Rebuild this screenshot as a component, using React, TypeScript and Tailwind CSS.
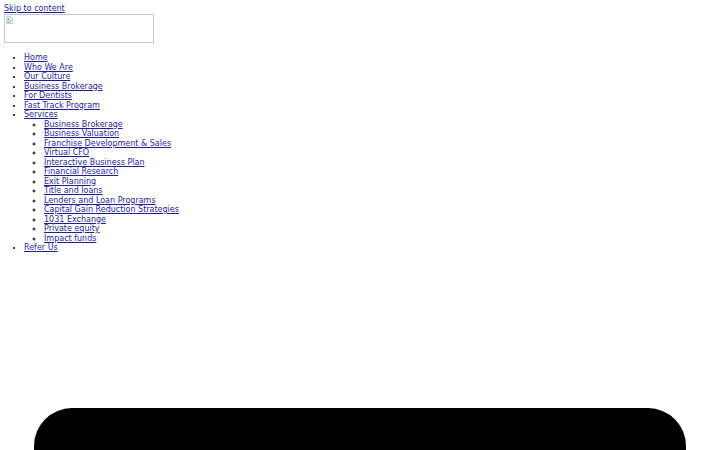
import React from "react";

const top1 = ["Home", "Who We Are", "Our Culture", "Business Brokerage", "For Dentists", "Fast Track Program"];
const sub = [
  "Business Brokerage",
  "Business Valuation",
  "Franchise Development & Sales",
  "Virtual CFO",
  "Interactive Business Plan",
  "Financial Research",
  "Exit Planning",
  "Title and loans",
  "Lenders and Loan Programs",
  "Capital Gain Reduction Strategies",
  "1031 Exchange",
  "Private equity",
  "Impact funds",
];

function BrokenIcon() {
  return (
    <svg width="8" height="8" viewBox="0 0 16 16" className="absolute left-[1px] top-[1px]">
      <path d="M1 1h9l3 3v4l-2 1-2-1-2 1-2-1-2 1-2-1z" fill="#e8f0f8" stroke="#9aa" strokeWidth="1" />
      <path d="M1 10l2 1 2-1 2 1 2-1 2 1 2-1v5H1z" fill="#e8f0f8" stroke="#9aa" strokeWidth="1" />
      <path d="M2 7l3-3 3 3" fill="#5a5" />
      <path d="M2 14l3-2 4 2z" fill="#5a5" />
    </svg>
  );
}

export default function App() {
  return (
    <div className="min-h-[450px] bg-white p-[4px] text-[8px] leading-[9.5px] text-black" style={{ fontFamily: '"DejaVu Sans", sans-serif' }}>
      <a href="#" className="text-[#1f1f95] underline">Skip to content</a>
      <div className="leading-[9.5px]">
        <span className="relative inline-block h-[29px] w-[150px] border border-[#c8c8c8] align-baseline">
          <BrokenIcon />
        </span>
      </div>
      <ul className="my-[8px] list-disc pl-[20px]">
        {top1.map((t) => (
          <li key={t}>
            <a href="#" className="text-[#1f1f95] underline">{t}</a>
          </li>
        ))}
        <li>
          <a href="#" className="text-[#1f1f95] underline">Services</a>
          <ul className="list-[circle] pl-[20px]">
            {sub.map((t) => (
              <li key={t}>
                <a href="#" className="text-[#1f1f95] underline">{t}</a>
              </li>
            ))}
          </ul>
        </li>
        <li>
          <a href="#" className="text-[#1f1f95] underline">Refer Us</a>
        </li>
      </ul>
      <div className="mx-[30px] mt-[155px] h-[60px] rounded-t-[38px] bg-black" />
    </div>
  );
}
